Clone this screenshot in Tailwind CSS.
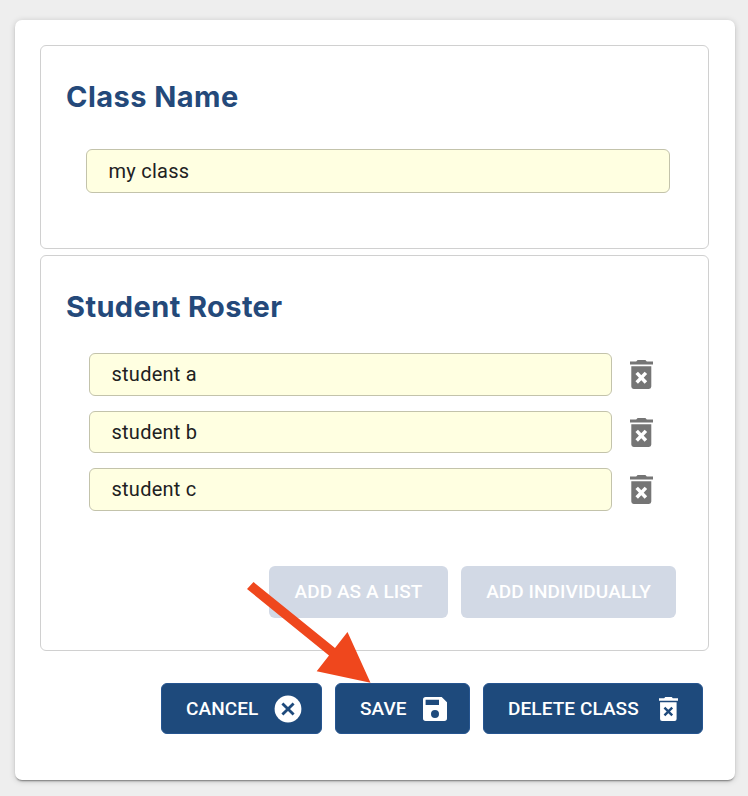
<!DOCTYPE html>
<html lang="en">
<head>
<meta charset="utf-8">
<title>Edit class</title>
<script src="https://cdn.jsdelivr.net/npm/@tailwindcss/browser@4"></script>
</head>
<body class="relative h-[796px] w-[748px] overflow-hidden bg-[#eee] pl-[15px] pt-5 font-['Roboto',sans-serif]">
<svg class="hidden">
  <symbol id="trash" viewBox="0 0 23 29">
    <path fill="currentColor" d="M0 1.6h6.2L7.6 0h7.8l1.4 1.6H23v3H0zM1.3 6.3h20v20.3q0 2.4-2.4 2.4H3.7q-2.4 0-2.4-2.4z"/>
  </symbol>
</svg>
<main class="h-[759.5px] w-[720px] rounded-[7px] bg-white pl-[25px] pt-[25px] shadow-[0_2px_2px_-1px_rgba(0,0,0,0.45),0_1px_6px_rgba(0,0,0,0.18)]">
  <section class="h-[204px] w-[669px] rounded-[6px] border border-[#d0d0d0] pl-[26px] pt-[32px]">
    <h2 class="-ml-px h-[38px] whitespace-nowrap font-['Inter',sans-serif] text-[29px] leading-[38px] font-bold tracking-[0.45px] text-[#24497a]">Class Name</h2>
    <input aria-label="Class name" value="my class" class="ml-[19px] mt-[33px] block h-[44px] w-[584px] rounded-[6px] border border-[#c3c3ab] bg-[#ffffe1] px-[21.5px] text-[20px] tracking-[0.25px] text-[#212121]">
  </section>
  <section class="mt-[6px] h-[396px] w-[669px] rounded-[6px] border border-[#d0d0d0] pl-[26px] pt-[32px]">
    <h2 class="-ml-px h-[38px] whitespace-nowrap font-['Inter',sans-serif] text-[29px] leading-[38px] font-bold tracking-[0.4px] text-[#24497a]">Student Roster</h2>
    <div class="ml-[22px] mt-[27px] flex h-[158px] flex-col justify-between">
      <div class="flex gap-[18px]">
        <input aria-label="Student 1" value="student a" class="h-[43px] w-[523px] rounded-[6px] border border-[#c3c3ab] bg-[#ffffe1] px-[21.5px] pb-[2px] text-[20px] tracking-[0.25px] text-[#212121]">
        <svg class="mt-[6.5px] h-[29px] w-[23px] text-[#757575]"><use href="#trash"/><path d="m6.7 12.9 9.2 9.6m0-9.6-9.2 9.600" stroke="#fff" stroke-width="3.5"/></svg>
      </div>
      <div class="flex gap-[18px]">
        <input aria-label="Student 2" value="student b" class="h-[42px] w-[523px] rounded-[6px] border border-[#c3c3ab] bg-[#ffffe1] px-[21.5px] text-[20px] tracking-[0.25px] text-[#212121]">
        <svg class="mt-[6.5px] h-[29px] w-[23px] text-[#757575]"><use href="#trash"/><path d="m6.7 12.9 9.2 9.6m0-9.6-9.2 9.600" stroke="#fff" stroke-width="3.5"/></svg>
      </div>
      <div class="flex gap-[18px]">
        <input aria-label="Student 3" value="student c" class="h-[43px] w-[523px] rounded-[6px] border border-[#c3c3ab] bg-[#ffffe1] px-[21.5px] pb-[2px] text-[20px] tracking-[0.25px] text-[#212121]">
        <svg class="mt-[6.5px] h-[29px] w-[23px] text-[#757575]"><use href="#trash"/><path d="m6.7 12.9 9.2 9.6m0-9.6-9.2 9.600" stroke="#fff" stroke-width="3.5"/></svg>
      </div>
    </div>
    <div class="mt-[55px] flex justify-end gap-[13px] pr-[32px] text-[19px] font-medium tracking-[0.08px] text-white">
      <button disabled class="h-[52px] w-[179px] whitespace-nowrap rounded-[6px] bg-[#d2d9e5]">ADD AS A LIST</button>
      <button disabled class="h-[52px] w-[215px] whitespace-nowrap rounded-[6px] bg-[#d2d9e5]">ADD INDIVIDUALLY</button>
    </div>
  </section>
  <div class="mt-[32px] flex justify-end gap-[13px] pr-[32px] text-[19px] font-medium tracking-[0.08px] text-white">
    <button class="flex h-[51px] w-[161px] items-center justify-between whitespace-nowrap rounded-[6px] border border-[#265590] bg-[#1e4a7c] pl-[24px] pr-[19px]"><span class="pt-px">CANCEL</span>
      <svg class="size-[28px]" viewBox="0 0 28 28"><circle cx="14" cy="14" r="13.4" fill="#fff"/><path d="m8.4 8.4 11.2 11.2m0-11.2L8.4 19.6" stroke="#1e4a7c" stroke-width="2.8"/></svg>
    </button>
    <button class="flex h-[51px] w-[135px] items-center justify-between whitespace-nowrap rounded-[6px] border border-[#265590] bg-[#1e4a7c] pl-[24px] pr-[22px]"><span class="pt-px">SAVE</span>
      <svg class="size-[24px]" viewBox="0 0 24 24"><path fill="#fff" fill-rule="evenodd" d="M2.7 0h16L24 5.3v16q0 2.7-2.7 2.7H2.7Q0 24 0 21.300V2.700Q0 0 2.700 0zM2.600 2.800v5.300h13.400V2.800zM12 13a4 4 0 1 0 0 8 4 4 0 0 0 0-8z"/></svg>
    </button>
    <button class="flex h-[51px] w-[220px] items-center justify-between whitespace-nowrap rounded-[6px] border border-[#265590] bg-[#1e4a7c] pl-[24px] pr-[24px]"><span class="pt-px">DELETE CLASS</span>
      <svg class="h-[24px] w-[19px]" viewBox="0 0 23 29"><use href="#trash" width="23" height="29"/><path d="m6.600 12.800 9.400 9.400m0-9.400-9.400 9.400" stroke="#1e4a7c" stroke-width="2.900"/></svg>
    </button>
  </div>
</main>
<svg class="pointer-events-none absolute left-[247px] top-[582px] h-[101px] w-[124px]" viewBox="247 582 124 101"><path fill="#ef471d" d="M253.500 582 335 648l12.500-16 23 50.800L316.700 671.200 329 655.500 247 589z"/></svg>
</body>
</html>
